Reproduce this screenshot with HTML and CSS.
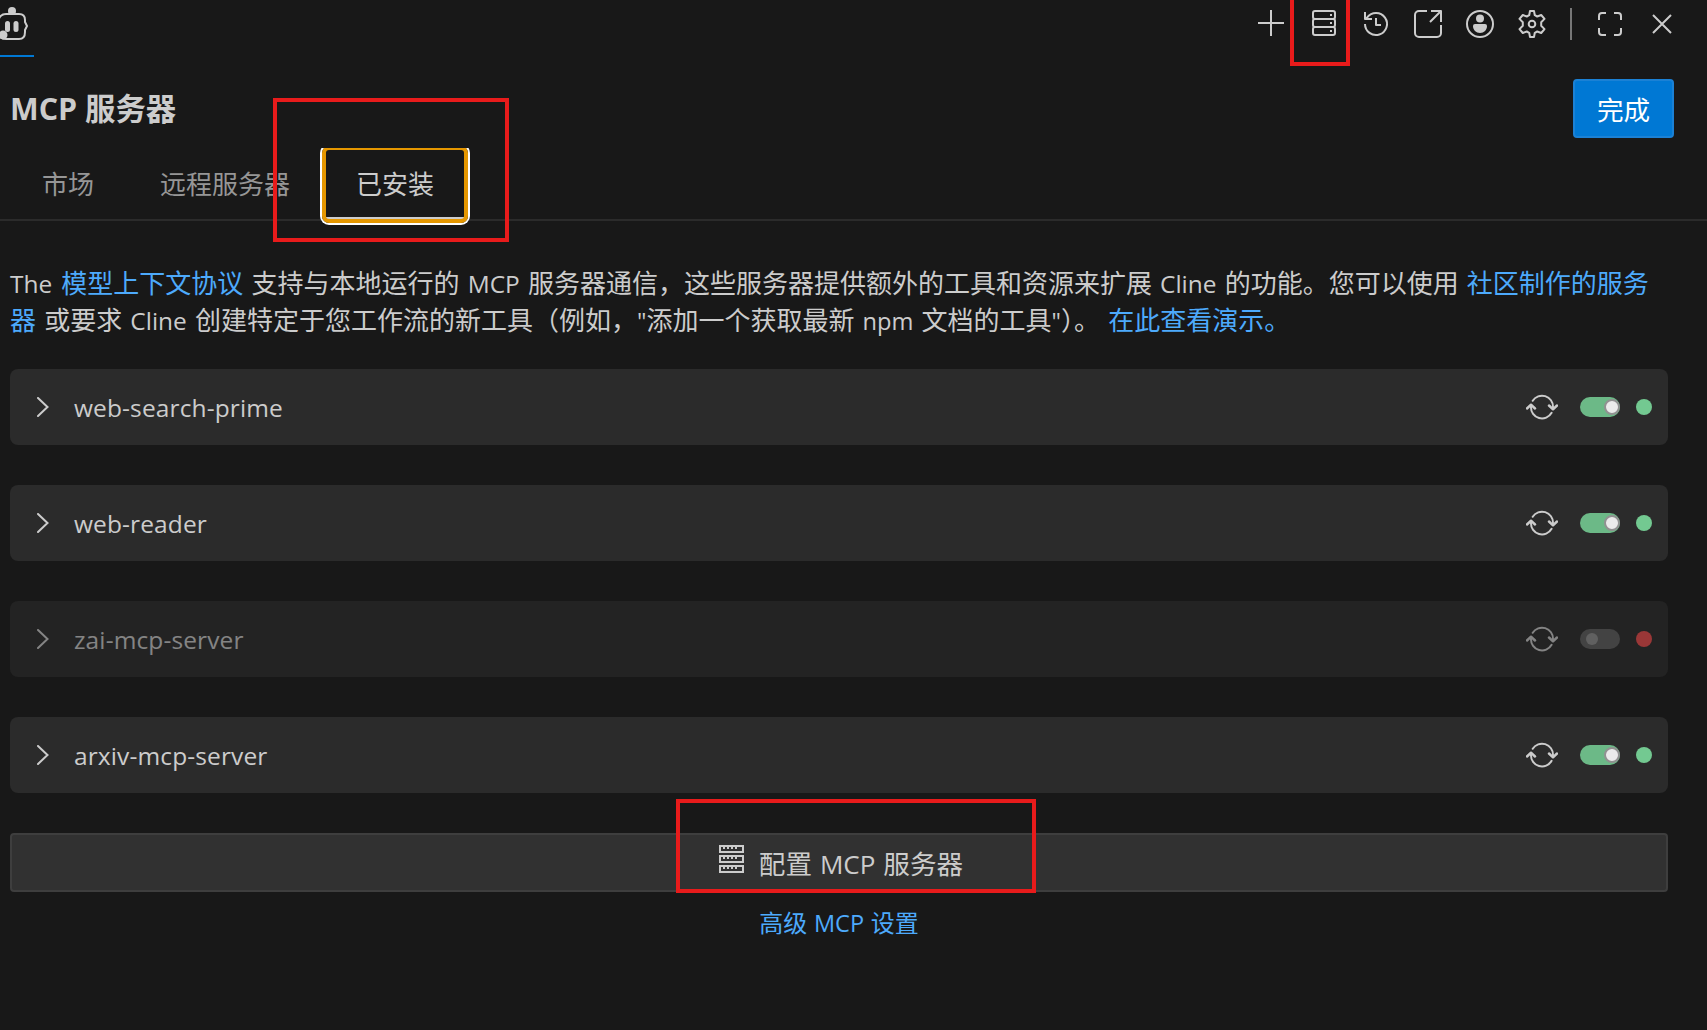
FILE: index.html
```html
<!DOCTYPE html>
<html lang="zh-CN">
<head>
<meta charset="utf-8">
<title>MCP 服务器</title>
<link rel="stylesheet" href="styles.css">
</head>
<body>
<svg class="sprite" aria-hidden="true">
  <symbol id="chevron" viewBox="0 0 12 20"><path d="M1 1l9.5 9L1 19" fill="none" stroke="currentColor" stroke-width="2" stroke-linecap="round"/></symbol>
  <symbol id="refresh" viewBox="0 0 32 26"><g fill="none" stroke="currentColor" stroke-width="2" stroke-linecap="round" stroke-linejoin="round"><path d="M6.7 6.8A11 11 0 0 1 27 13v1.5M25.6 18.8A11 11 0 0 1 5 13v-1.5"/><path d="M23 11.5l4 3.8 4-3.8M1 14.5l4-3.8 4 3.8" stroke-width="2.5"/></g></symbol>
</svg>
<div class="panel">
  <header class="topbar">
    <div class="brand">
      <svg width="30" height="34" viewBox="0 0 30 34"><g fill="currentColor"><circle cx="12" cy="4" r="4"/><rect x="5" y="14" width="5" height="11" rx="2.5"/><rect x="13.500" y="14" width="5" height="11" rx="2.500"/><circle cx="3" cy="28" r="4.500"/></g><path d="M-2 15C-1 9 2 7 6 7h13c4 0 6 2.500 6 6v2l2 4-2 4v2c0 4-2 7-6 7H6c-4 0-6-1-7-4" fill="none" stroke="currentColor" stroke-width="2"/></svg>
    </div>
    <nav class="actions">
      <svg class="icon" viewBox="0 0 32 32"><path d="M2 16h26M15 3v26"/></svg>
      <svg class="icon" viewBox="0 0 32 32"><rect x="5" y="4" width="22" height="8" rx="2"/><rect x="5" y="12" width="22" height="8" rx="2"/><rect x="5" y="20" width="22" height="8" rx="2"/><path d="M22 8h2M22 16h2M22 24h2"/></svg>
      <svg class="icon" viewBox="0 0 32 32"><path d="M5 17a11 11 0 1 0 2.200-6.600L5.500 12M5 5v7h7M16 11v7h5"/></svg>
      <svg class="icon" viewBox="0 0 32 32"><path d="M15 4H7a4 4 0 0 0-4 4v18a4 4 0 0 0 4 4h18a4 4 0 0 0 4-4v-8M19 4h10v11M29 4L18 15"/></svg>
      <svg class="icon" viewBox="0 0 32 32"><circle cx="16" cy="17" r="13"/><circle cx="16" cy="11.500" r="4" class="solid"/><path class="solid" d="M9 19q0-2 2-2h10q2 0 2 2c0 4-3 7-7 7s-7-3-7-7z"/></svg>
      <svg class="icon" viewBox="0 0 32 32"><path d="M13.200 8.200L14 4h4l.8 4.200 2.400 1.300 4-1.500 3.300 3.900-3.300 3.300v3.600l3.300 3.300-3.300 3.900-4-1.500-2.400 1.300L18 30h-4l-.8-4.200-2.400-1.300-4 1.500-3.300-3.900 3.300-3.300v-3.600L3.500 11.900 6.800 8l4 1.500z"/><circle cx="16" cy="17" r="3.300"/></svg>
      <span class="separator"></span>
      <svg class="icon" viewBox="0 0 32 32"><path d="M12 6H8a3 3 0 0 0-3 3v4M20 6h4a3 3 0 0 1 3 3v4M12 28H8a3 3 0 0 1-3-3v-4M20 28h4a3 3 0 0 0 3-3v-4"/></svg>
      <svg class="icon" viewBox="0 0 32 32"><path d="M7 8l18 18M25 8L7 26"/></svg>
    </nav>
  </header>

  <div class="heading">
    <h1>MCP 服务器</h1>
    <button class="done">完成</button>
  </div>

  <div class="tabs">
    <div class="tab">市场</div>
    <div class="tab">远程服务器</div>
    <div class="tab active">已安装</div>
  </div>

  <main class="content">
    <p class="intro"><span class="latin">The</span> <a class="protocol">模型上下文协议</a> 支持与本地运行的 <span class="latin">MCP</span> 服务器通信，这些服务器提供额外的工具和资源来扩展 <span class="latin">Cline</span> 的功能。您可以使用 <a>社区制作的服务器</a> 或要求 <span class="latin">Cline</span> 创建特定于您工作流的新工具（例如，<span class="narrow">"</span>添加一个获取最新 <span class="narrow">npm</span> 文档的工具<span class="narrow">"</span>）。 <a>在此查看演示。</a></p>

    <div class="servers">
      <div class="server"><svg class="chevron"><use href="#chevron"/></svg><span class="name">web-search-prime</span><svg class="refresh"><use href="#refresh"/></svg><span class="toggle on"></span><span class="status"></span></div>
      <div class="server"><svg class="chevron"><use href="#chevron"/></svg><span class="name">web-reader</span><svg class="refresh"><use href="#refresh"/></svg><span class="toggle on"></span><span class="status"></span></div>
      <div class="server disabled"><svg class="chevron"><use href="#chevron"/></svg><span class="name">zai-mcp-server</span><svg class="refresh"><use href="#refresh"/></svg><span class="toggle"></span><span class="status"></span></div>
      <div class="server"><svg class="chevron"><use href="#chevron"/></svg><span class="name">arxiv-mcp-server</span><svg class="refresh"><use href="#refresh"/></svg><span class="toggle on"></span><span class="status"></span></div>
    </div>

    <button class="configure">
      <svg width="26" height="28" viewBox="0 0 26 28"><path fill="none" stroke="currentColor" stroke-width="2" d="M1 1h23v6H1zM1 11h23v6H1zM1 21h23v6H1z"/><path stroke="currentColor" stroke-width="2" d="M5 1v3M9 1v3M13 1v3M17 1v3M5 11v3M9 11v3M13 11v3M17 11v3M5 21v3M9 21v3M13 21v3M17 21v3"/></svg>
      <span>配置 <span class="caption">MCP</span> 服务器</span>
    </button>
    <a class="advanced">高级 <span class="caption">MCP</span> 设置</a>
  </main>

  <div class="mark mark-tab"></div>
  <div class="mark mark-icon"></div>
  <div class="mark mark-configure"></div>
</div>
</body>
</html>
```
FILE: styles.css
```css
*, *::after { box-sizing: border-box; }
body {
  margin: 0;
  background: #181818;
  color: #cccccc;
  font: 26px/37px "Open Sans", "Noto Sans CJK SC", sans-serif;
}
.sprite { display: none; }
.panel { position: relative; width: 1707px; height: 1030px; overflow: hidden; background: #181818; }
.latin { font-size: 0.94em; }
.narrow { font-size: 0.91em; }
.caption { font-size: 0.98em; }
a { color: #4daafc; }
button { font: inherit; color: inherit; padding: 0; }

.topbar { display: flex; justify-content: space-between; height: 57px; }
.brand { width: 34px; padding-top: 7px; border-bottom: 2px solid #0078d4; }
.brand svg { display: block; }
.actions { display: flex; gap: 20px; padding: 7px 29px 0 0; height: 40px; }
.icon { width: 32px; height: 32px; fill: none; stroke: currentColor; stroke-width: 2; stroke-linejoin: round; }
.icon .solid { fill: currentColor; stroke: none; }
.separator { width: 2px; height: 32px; margin: 1px 2px 0; background: #777777; }

.heading { display: flex; justify-content: space-between; align-items: center; height: 59px; margin-top: 22px; padding: 0 33px 0 10px; }
h1 { margin: 0; font-size: 30.4px; font-weight: 700; }
.done { width: 101px; height: 59px; padding-top: 3px; border: 2px solid #1b81d5; border-radius: 4px; background: #0078d4; color: #ffffff; font-size: 26.6px; }

.tabs { display: flex; gap: 2px; height: 73px; margin-top: 10px; padding: 0 10px; border-bottom: 2px solid #2b2b2b; clip-path: inset(0 0 -10px 0); }
.tab { padding: 18px 32px 0; color: #969696; }
.tab.active { position: relative; height: 71px; color: #cccccc; border-bottom: 2px solid #cccccc; }
.tab.active::after { content: ""; position: absolute; inset: -2px -2px -6px; border: 4px solid #e59700; border-radius: 7px; box-shadow: 0 0 0 2px #ffffff; }

.content { padding: 44px 39px 0 10px; }
.intro { margin: 0; word-spacing: 1.4px; }
.protocol { margin-left: 1px; }
.servers { display: grid; gap: 40px; margin-top: 29px; }
.server { display: flex; align-items: center; height: 76px; padding: 0 16px 0 27px; border-radius: 8px; background: #2b2b2b; }
.disabled { opacity: 0.6; }
.chevron { width: 12px; height: 20px; }
.name { flex: 1; margin-left: 25px; font-size: 24.5px; letter-spacing: 0.12px; }
.refresh { width: 32px; height: 26px; margin-right: 22px; }
.toggle { position: relative; width: 40px; height: 20px; border-radius: 10px; background: #606060; margin-right: 16px; }
.toggle::after { content: ""; position: absolute; left: 6px; top: 4px; width: 12px; height: 12px; border-radius: 50%; background: #909090; }
.toggle.on { background: #6cb987; }
.toggle.on::after { left: 24px; top: 2px; width: 16px; height: 16px; border: 2px solid #919191; background: #ebebeb; }
.status { width: 16px; height: 16px; border-radius: 50%; background: #73c991; }
.disabled .status { background: #f14c4c; }

.configure { display: flex; justify-content: center; gap: 14px; width: 100%; height: 59px; margin-top: 40px; padding: 10px 0 0 4px; border: 2px solid #3e3e3e; border-radius: 4px; background: #313131; font-size: 26.6px; word-spacing: 1px; }
.configure > span { padding-top: 1px; }
.advanced { display: block; margin-top: 12px; text-align: center; font-size: 24px; word-spacing: 0.5px; }

.mark { position: absolute; border: 4px solid #e81b1b; }
.mark-tab { left: 273px; top: 98px; width: 236px; height: 144px; }
.mark-icon { left: 1290px; top: -6px; width: 60px; height: 72px; }
.mark-configure { left: 676px; top: 799px; width: 360px; height: 94px; }
```
